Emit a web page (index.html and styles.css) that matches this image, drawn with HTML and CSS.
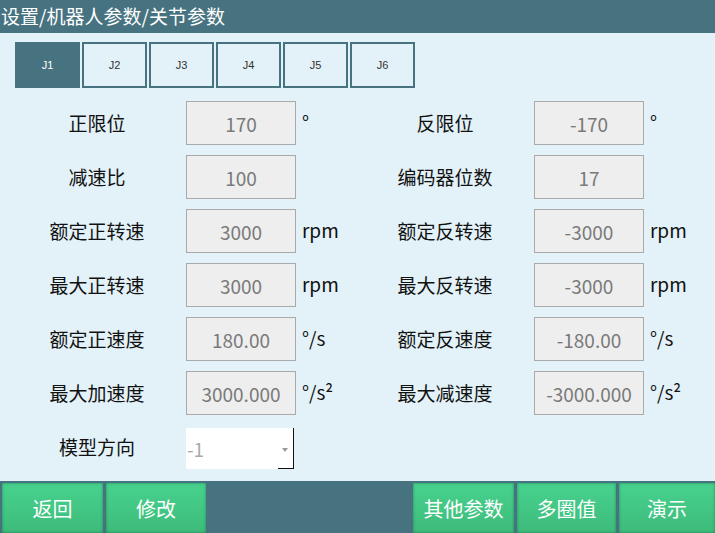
FILE: index.html
```html
<!DOCTYPE html>
<html>
<head>
  <meta charset="utf-8"/>
  <link rel="stylesheet" href="styles.css">
  <title>关节参数</title>
</head>
<body>
  <div class="screen">
    <div class="title-bar">设置/机器人参数/关节参数</div>

    <div class="joint-tabs">
      <div class="joint-tab active">J1</div>
      <div class="joint-tab">J2</div>
      <div class="joint-tab">J3</div>
      <div class="joint-tab">J4</div>
      <div class="joint-tab">J5</div>
      <div class="joint-tab">J6</div>
    </div>

    <div class="param-grid">
      <div class="param-label">正限位</div>
      <div class="param-value">170</div>
      <div class="param-unit">°</div>
      <div class="param-label">反限位</div>
      <div class="param-value">-170</div>
      <div class="param-unit">°</div>

      <div class="param-label">减速比</div>
      <div class="param-value">100</div>
      <div class="param-unit"></div>
      <div class="param-label">编码器位数</div>
      <div class="param-value">17</div>
      <div class="param-unit"></div>

      <div class="param-label">额定正转速</div>
      <div class="param-value">3000</div>
      <div class="param-unit">rpm</div>
      <div class="param-label">额定反转速</div>
      <div class="param-value">-3000</div>
      <div class="param-unit">rpm</div>

      <div class="param-label">最大正转速</div>
      <div class="param-value">3000</div>
      <div class="param-unit">rpm</div>
      <div class="param-label">最大反转速</div>
      <div class="param-value">-3000</div>
      <div class="param-unit">rpm</div>

      <div class="param-label">额定正速度</div>
      <div class="param-value">180.00</div>
      <div class="param-unit">°/s</div>
      <div class="param-label">额定反速度</div>
      <div class="param-value">-180.00</div>
      <div class="param-unit">°/s</div>

      <div class="param-label">最大加速度</div>
      <div class="param-value">3000.000</div>
      <div class="param-unit">°/s²</div>
      <div class="param-label">最大减速度</div>
      <div class="param-value">-3000.000</div>
      <div class="param-unit">°/s²</div>

      <div class="param-label">模型方向</div>
      <div class="param-select">
        <span class="select-text">-1</span>
        <span class="select-arrow"></span>
      </div>
    </div>

    <div class="button-bar">
      <div class="action-btn">返回</div>
      <div class="action-btn">修改</div>
      <div class="bar-spacer"></div>
      <div class="action-btn">其他参数</div>
      <div class="action-btn">多圈值</div>
      <div class="action-btn">演示</div>
    </div>
  </div>
</body>
</html>
```

FILE: styles.css
```css
html, body {
  margin: 0;
  padding: 0;
}

body {
  font-family: "Noto Sans CJK SC", "Noto Sans", sans-serif;
  background: #e3f2f8;
}

.screen {
  width: 715px;
  height: 533px;
  display: flex;
  flex-direction: column;
  overflow: hidden;
}

.title-bar {
  height: 33px;
  line-height: 31px;
  background: #46737f;
  color: #ffffff;
  font-size: 19px;
  padding-left: 1px;
}

/* joint selector */
.joint-tabs {
  display: flex;
  gap: 2px;
  padding: 9px 0 0 15px;
}

.joint-tab {
  width: 61px;
  height: 42px;
  border: 2px solid #46737f;
  color: #333;
  font-family: "Liberation Sans", sans-serif;
  font-size: 11px;
  display: flex;
  align-items: center;
  justify-content: center;
}

.joint-tab.active {
  background: #46737f;
  color: #ffffff;
}

/* parameter table */
.param-grid {
  display: grid;
  grid-template-columns: 164px 110px 74px 164px 110px 1fr;
  grid-auto-rows: 44px;
  row-gap: 10px;
  padding: 13px 0 0 22px;
  flex: 1 1 auto;
}

.param-label {
  padding-right: 14px;
  text-align: center;
  font-size: 19px;
  color: #111;
  line-height: 44px;
}

.param-value {
  background: #eeeeee;
  border: 1px solid #aaaaaa;
  color: #7a7a7a;
  font-size: 19px;
  display: flex;
  align-items: center;
  justify-content: center;
}

.param-unit {
  padding-left: 6px;
  font-size: 19px;
  color: #111;
  line-height: 42px;
}

.param-select {
  position: relative;
  width: 107px;
  height: 41px;
  margin-top: 3px;
  background: #ffffff;
  border-right: 1px solid #111;
  display: flex;
  align-items: center;
}

/* short black stub under the arrow */
.param-select::after {
  content: "";
  position: absolute;
  right: 0;
  bottom: 0;
  width: 15px;
  border-bottom: 1px solid #111;
}

.select-text {
  font-size: 19px;
  color: #aaaaaa;
  padding-left: 1px;
}

.select-arrow {
  position: absolute;
  right: 5px;
  top: 20px;
  border-left: 3px solid transparent;
  border-right: 3px solid transparent;
  border-top: 4px solid #999;
}

/* bottom actions */
.button-bar {
  height: 52px;
  background: #46737f;
  display: grid;
  grid-template-columns: 101px 100px 1fr 101px 99px 96px;
  column-gap: 3px;
  padding: 2px 0 0 2px;
  box-sizing: border-box;
}

.action-btn {
  background: linear-gradient(#48d28e, #3dbb7b);
  box-shadow: inset 0 0 3px rgba(20, 90, 55, 0.6);
  color: #ffffff;
  font-size: 20px;
  display: flex;
  align-items: center;
  justify-content: center;
}
```
